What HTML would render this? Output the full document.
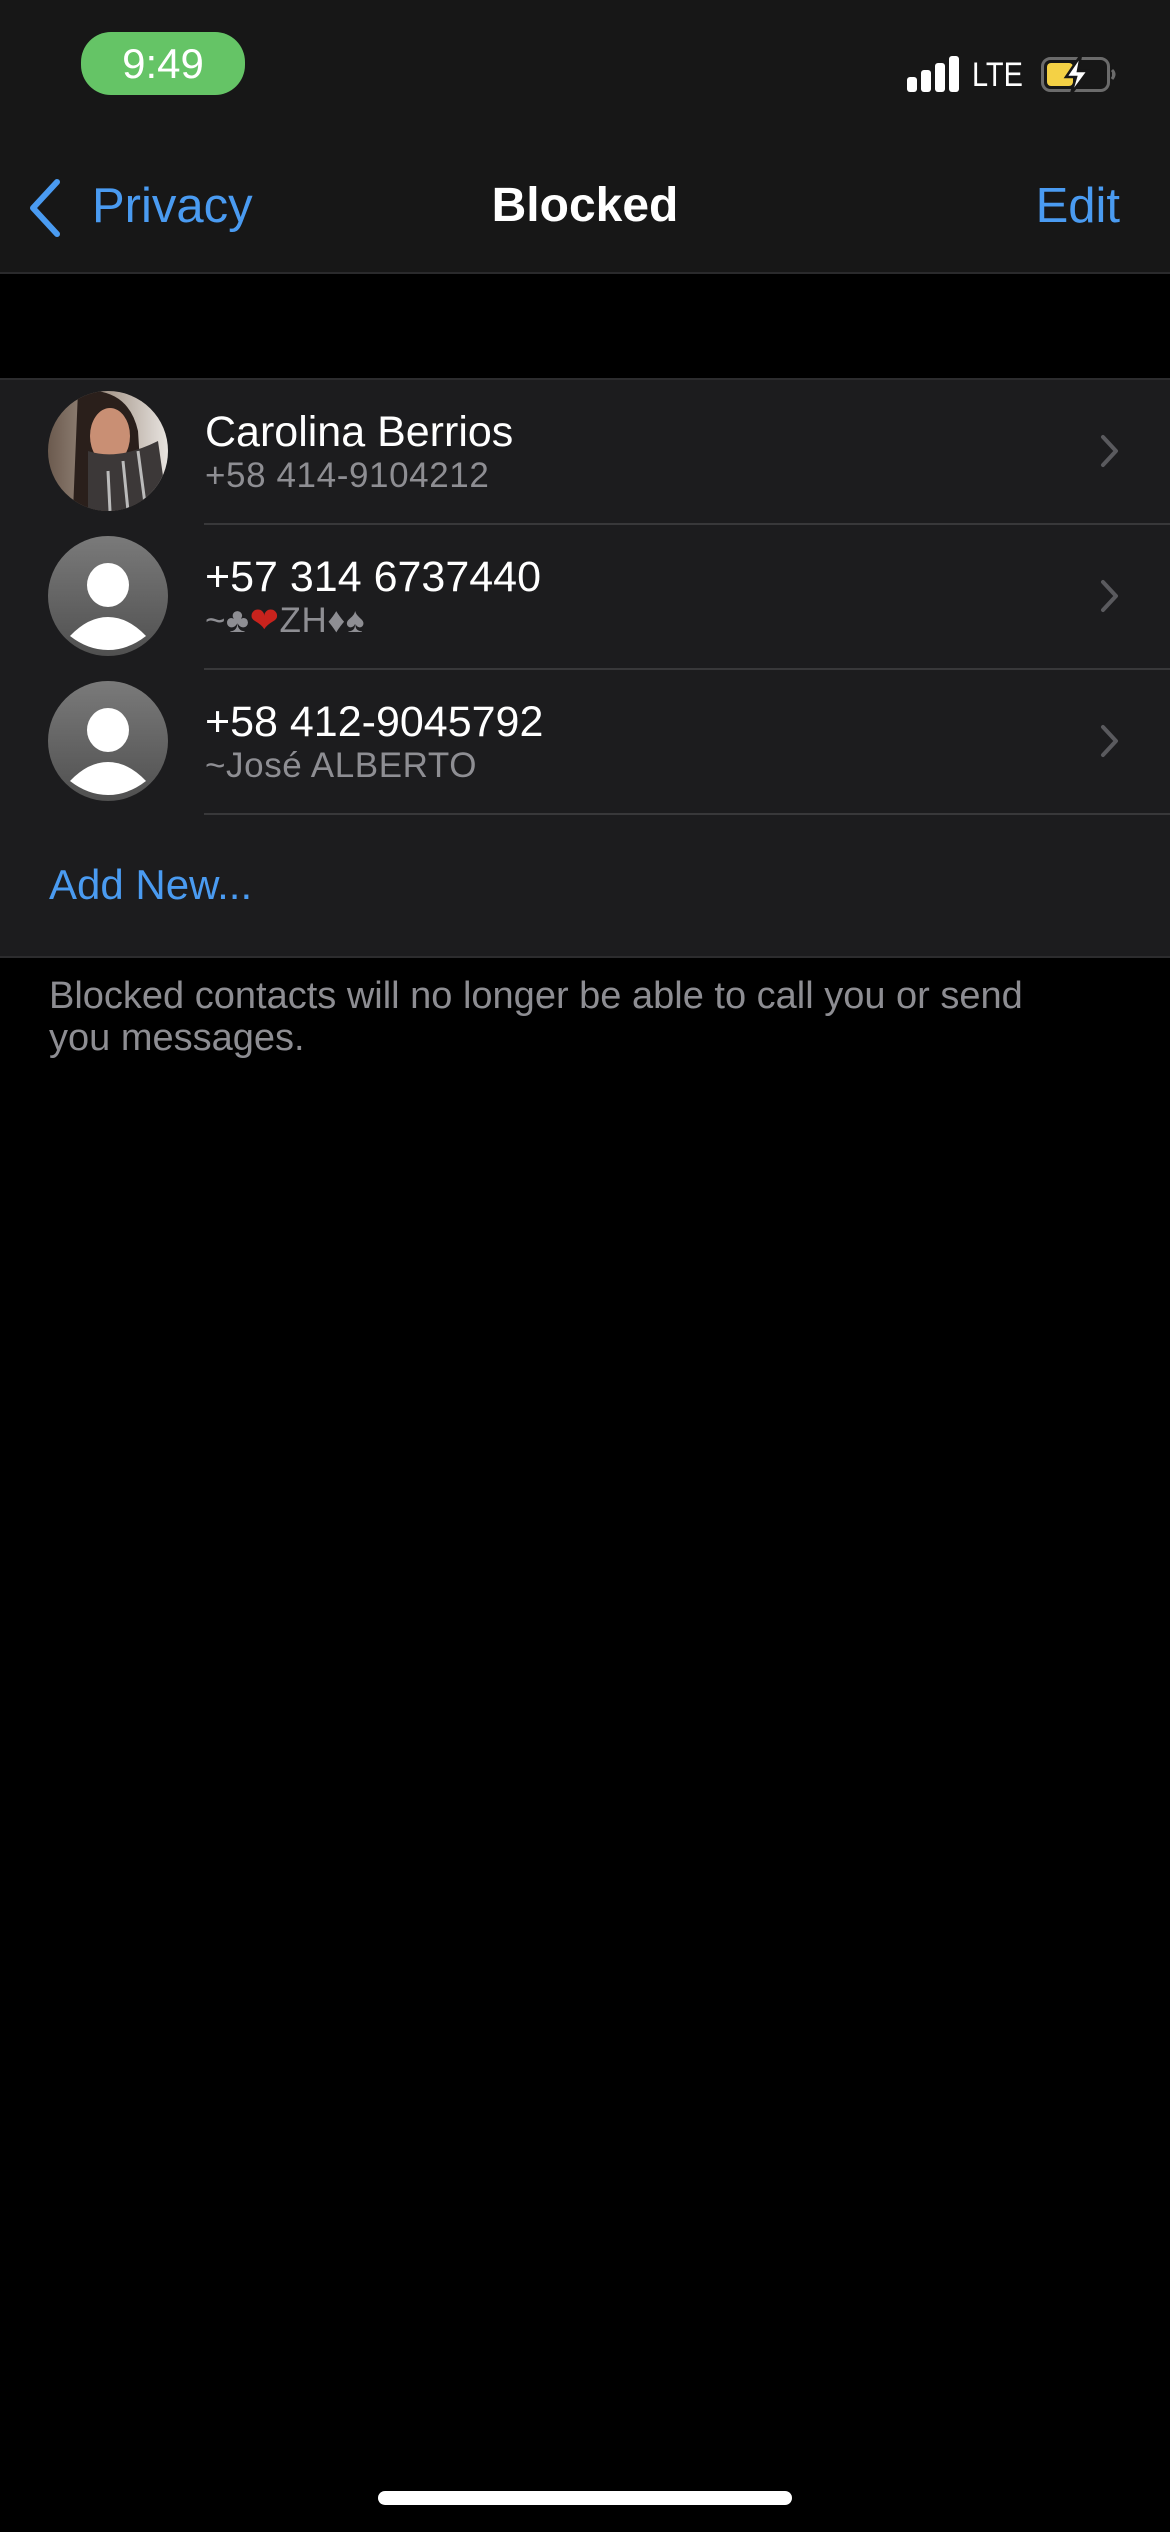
<!DOCTYPE html>
<html><head><meta charset="utf-8">
<style>
*{margin:0;padding:0;box-sizing:border-box}
html,body{width:1170px;height:2532px;background:#000;overflow:hidden;font-family:"Liberation Sans",sans-serif}
.abs{position:absolute}
.nav{position:absolute;left:0;top:0;width:1170px;height:274px;background:#171717;border-bottom:2px solid #2a2a2c}
.pill{left:81px;top:32px;width:164px;height:63px;border-radius:30px;background:#65c466;color:#fff;font-size:42px;text-align:center;line-height:63px}
.blue{color:#4a9bf1}
.list{position:absolute;left:0;top:378px;width:1170px;height:580px;background:#1c1c1e;border-top:2px solid #2c2c2e;border-bottom:2px solid #2c2c2e}
.sep{position:absolute;left:204px;right:0;height:2px;background:#38383a}
.name{position:absolute;left:205px;color:#fff;font-size:43px;white-space:nowrap}
.sub{position:absolute;left:205px;color:#8e8e93;font-size:35px;letter-spacing:0.6px;white-space:nowrap}
.chev{position:absolute;left:1098px}
.foot{position:absolute;left:49px;top:975px;color:#8d8d92;font-size:38px;line-height:42px;white-space:nowrap}
</style></head><body>
<div class="nav"></div>
<div class="abs pill">9:49</div>
<!-- signal -->
<div class="abs" style="left:907px;top:77px;width:10px;height:15px;background:#fff;border-radius:3px"></div>
<div class="abs" style="left:921px;top:70px;width:10px;height:22px;background:#fff;border-radius:3px"></div>
<div class="abs" style="left:935px;top:63px;width:10px;height:29px;background:#fff;border-radius:3px"></div>
<div class="abs" style="left:949px;top:56px;width:10px;height:36px;background:#fff;border-radius:3px"></div>
<div class="abs" style="left:972px;top:56px;color:#fff;font-size:34px;line-height:38px;transform:scaleX(0.85);transform-origin:0 0">LTE</div>
<svg class="abs" style="left:1038px;top:52px" width="80" height="44" viewBox="0 0 80 44">
<rect x="4.5" y="6.5" width="66" height="32" rx="8" fill="none" stroke="#6b6b6b" stroke-width="3"/>
<rect x="9" y="11" width="26" height="23" rx="4" fill="#f4d145"/>
<path d="M74 18 q4 4 0 9" fill="#6b6b6b" stroke="#6b6b6b" stroke-width="3"/>
<path d="M43 3 L28 25 L38 25 L33 42 L50 19 L40 19 Z" fill="#fff" stroke="#171717" stroke-width="2.5"/>
</svg>
<!-- nav -->
<svg class="abs" style="left:25px;top:178px" width="40" height="60" viewBox="0 0 40 60"><path d="M32 4 L8 30 L32 56" fill="none" stroke="#4a9bf1" stroke-width="6" stroke-linecap="round" stroke-linejoin="round"/></svg>
<div class="abs blue" style="left:92px;top:178px;font-size:49px">Privacy</div>
<div class="abs" style="left:0;width:1170px;top:178px;text-align:center;color:#fff;font-size:48px;font-weight:bold">Blocked</div>
<div class="abs blue" style="right:50px;top:178px;font-size:49px">Edit</div>

<div class="list">
 <div class="sep" style="top:143px"></div>
 <div class="sep" style="top:288px"></div>
 <div class="sep" style="top:433px"></div>
</div>
<!-- row1 avatar photo -->
<svg class="abs" style="left:48px;top:391px" width="120" height="120" viewBox="0 0 120 120">
<defs><clipPath id="c1"><circle cx="60" cy="60" r="60"/></clipPath>
<linearGradient id="bg1" x1="0" y1="0" x2="1" y2="0"><stop offset="0" stop-color="#6b5a4e"/><stop offset=".5" stop-color="#a89a8e"/><stop offset="1" stop-color="#e8e4e0"/></linearGradient></defs>
<g clip-path="url(#c1)">
<rect width="120" height="120" fill="url(#bg1)"/>
<path d="M30 0 Q80 -5 90 40 L95 120 L25 120 Z" fill="#2a1f1b"/>
<ellipse cx="62" cy="45" rx="20" ry="28" fill="#c98f74"/>
<path d="M40 60 Q70 70 110 50 L120 120 L40 120 Z" fill="#3c3838"/>
<path d="M60 80 L62 120 M75 70 L80 120 M90 60 L98 120" stroke="#bbb" stroke-width="3"/>
</g></svg>
<div class="name" style="top:408px">Carolina Berrios</div>
<div class="sub" style="top:456px">+58 414-9104212</div>
<!-- row2 -->
<svg class="abs" style="left:48px;top:536px" width="120" height="120" viewBox="0 0 120 120">
<defs><linearGradient id="g" x1="0" y1="0" x2="0" y2="1"><stop offset="0" stop-color="#7a7a7a"/><stop offset="1" stop-color="#505050"/></linearGradient></defs>
<circle cx="60" cy="60" r="60" fill="url(#g)"/>
<ellipse cx="60" cy="49" rx="21" ry="22" fill="#fff"/>
<path d="M22 100 Q40 81 60 81 Q80 81 98 100 Q80 114 60 114 Q40 114 22 100 Z" fill="#fff"/>
</svg>
<div class="name" style="top:553px">+57 314 6737440</div>
<div class="sub" style="top:601px">~♣<span style="color:#c8231d">❤</span>ZH♦♠</div>
<!-- row3 -->
<svg class="abs" style="left:48px;top:681px" width="120" height="120" viewBox="0 0 120 120">
<circle cx="60" cy="60" r="60" fill="url(#g)"/>
<ellipse cx="60" cy="49" rx="21" ry="22" fill="#fff"/>
<path d="M22 100 Q40 81 60 81 Q80 81 98 100 Q80 114 60 114 Q40 114 22 100 Z" fill="#fff"/>
</svg>
<div class="name" style="top:698px">+58 412-9045792</div>
<div class="sub" style="top:746px">~José ALBERTO</div>
<!-- chevrons -->
<svg class="chev" style="top:434px" width="24" height="34" viewBox="0 0 24 34"><path d="M5 3 L18 17 L5 31" fill="none" stroke="#5a5a5e" stroke-width="4" stroke-linecap="round" stroke-linejoin="round"/></svg>
<svg class="chev" style="top:579px" width="24" height="34" viewBox="0 0 24 34"><path d="M5 3 L18 17 L5 31" fill="none" stroke="#5a5a5e" stroke-width="4" stroke-linecap="round" stroke-linejoin="round"/></svg>
<svg class="chev" style="top:724px" width="24" height="34" viewBox="0 0 24 34"><path d="M5 3 L18 17 L5 31" fill="none" stroke="#5a5a5e" stroke-width="4" stroke-linecap="round" stroke-linejoin="round"/></svg>
<div class="abs blue" style="left:49px;top:861px;font-size:42px">Add New...</div>
<div class="foot">Blocked contacts will no longer be able to call you or send<br>you messages.</div>
<div class="abs" style="left:378px;top:2491px;width:414px;height:14px;border-radius:7px;background:#fff"></div>
</body></html>
